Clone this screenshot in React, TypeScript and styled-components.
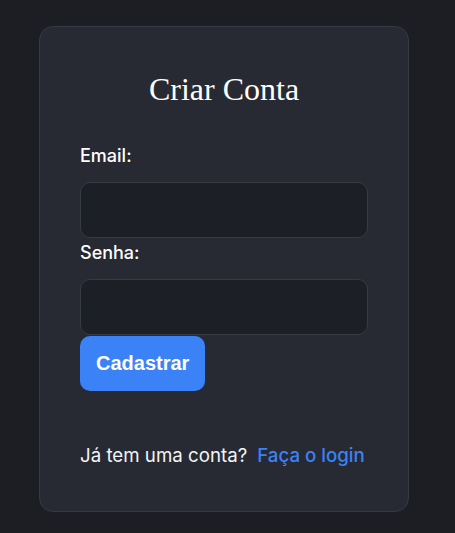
import React from "react";
import styled, { createGlobalStyle } from "styled-components";

const Global = createGlobalStyle`
  html, body { margin: 0; padding: 0; background: #1c1e24; }
  body { font-family: Inter, "Noto Sans", sans-serif; color: #f3f4f6; }
  * { box-sizing: border-box; }
`;

const Page = styled.div`
  min-height: 533px;
  padding: 26px 0 0 39px;
  display: flex;
  align-items: flex-start;
`;

const Card = styled.div`
  width: 370px;
  background: #272a33;
  border: 1px solid #363a45;
  border-radius: 14px;
  padding: 40px 40px 44px;
  display: flex;
  flex-direction: column;
`;

const Title = styled.h1`
  margin: 0 0 34px;
  font-family: "Liberation Serif", "DejaVu Serif", serif;
  font-weight: 400;
  font-size: 32px;
  line-height: 44px;
  text-align: center;
  color: #ffffff;
`;

const Label = styled.label`
  display: block;
  font-size: 18px;
  font-weight: 500;
  line-height: 22px;
  color: #ffffff;
  margin-bottom: 15px;
`;

const Input = styled.input`
  display: block;
  width: 100%;
  height: 56px;
  background: #1d1f26;
  border: 1px solid #373b46;
  border-radius: 10px;
  color: #fff;
  padding: 0 14px;
  font-size: 16px;
  outline: none;
  margin-bottom: ${(p: { $mb: number }) => p.$mb}px;
`;

const Button = styled.button`
  align-self: flex-start;
  height: 55px;
  padding: 0 16px;
  background: #3b82f6;
  color: #ffffff;
  border: none;
  border-radius: 10px;
  font-family: "Liberation Sans", Arial, sans-serif;
  font-weight: 700;
  font-size: 20px;
  cursor: pointer;
`;

const Footer = styled.p`
  margin: 53px 0 0;
  font-size: 18.7px;
  line-height: 23px;
  color: #f3f4f6;
  display: flex;
  gap: 10px;
`;

const Link = styled.a`
  color: #3b82f6;
  font-weight: 500;
  text-decoration: none;
`;

export default function App() {
  return (
    <>
      <Global />
      <Page>
        <Card>
          <Title>Criar Conta</Title>
          <Label htmlFor="email">Email:</Label>
          <Input id="email" type="email" $mb={4} />
          <Label htmlFor="senha">Senha:</Label>
          <Input id="senha" type="password" $mb={1} />
          <Button>Cadastrar</Button>
          <Footer>
            <span>Já tem uma conta?</span>
            <Link href="#">Faça o login</Link>
          </Footer>
        </Card>
      </Page>
    </>
  );
}
